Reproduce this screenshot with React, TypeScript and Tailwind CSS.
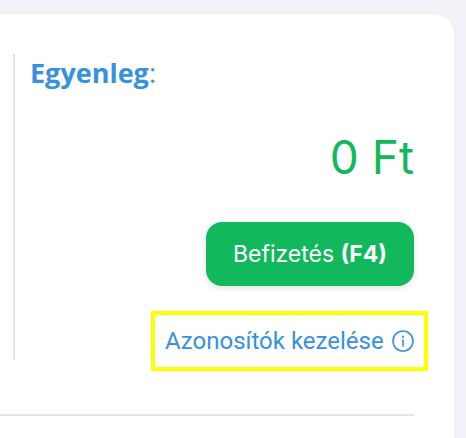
export default function App() {
  return (
    <div className="h-[438px] w-[466px] overflow-hidden bg-[#f1f3f8] pr-3 pt-[14px] font-['Inter',sans-serif]">
      <div className="h-[424px] rounded-tr-[20px] bg-white pr-10 pt-10 shadow-[0_0_4px_rgba(0,0,0,0.03)]">
        {/* Balance */}
        <div className="ml-[13px] flex h-[306px] flex-col border-l-2 border-[#e2e6ec] pl-[15px]">
          <h2 className="mt-[1px] text-[27px]/[36px] font-bold text-[#3890e0] font-['Open_Sans',sans-serif]">
            Egyenleg<span className="font-medium">:</span>
          </h2>
          <p className="mt-[38px] text-right text-[46px]/[56px] font-normal text-[#12b85c]">0 Ft</p>
          <div className="mt-[37px] flex justify-end">
            <button className="h-16 w-52 rounded-2xl bg-[#12b85c] text-[23px] text-white shadow-[0_2px_6px_rgba(0,0,0,0.12)]">
              Befizetés <b>(F4)</b>
            </button>
          </div>
          <div className="mr-[-14px] mt-[25px] flex justify-end">
            <a className="flex h-[60px] w-[277px] items-center gap-2 border-4 border-[#ffff00] pl-[10px] text-[24px] text-[#3890e0] font-['Roboto',sans-serif]">
              Azonosítók kezelése
              <svg width="22" height="22" viewBox="0 0 22 22" fill="none" stroke="currentColor" strokeWidth="1.6" strokeLinecap="round">
                <circle cx="11" cy="11" r="10" />
                <path d="M11 10v6" />
                <path d="M11 6.5v.5" strokeWidth="2" />
              </svg>
            </a>
          </div>
        </div>
        <div className="mt-[54px] h-[2px] bg-[#e2e6ec]" />
      </div>
    </div>
  );
}
